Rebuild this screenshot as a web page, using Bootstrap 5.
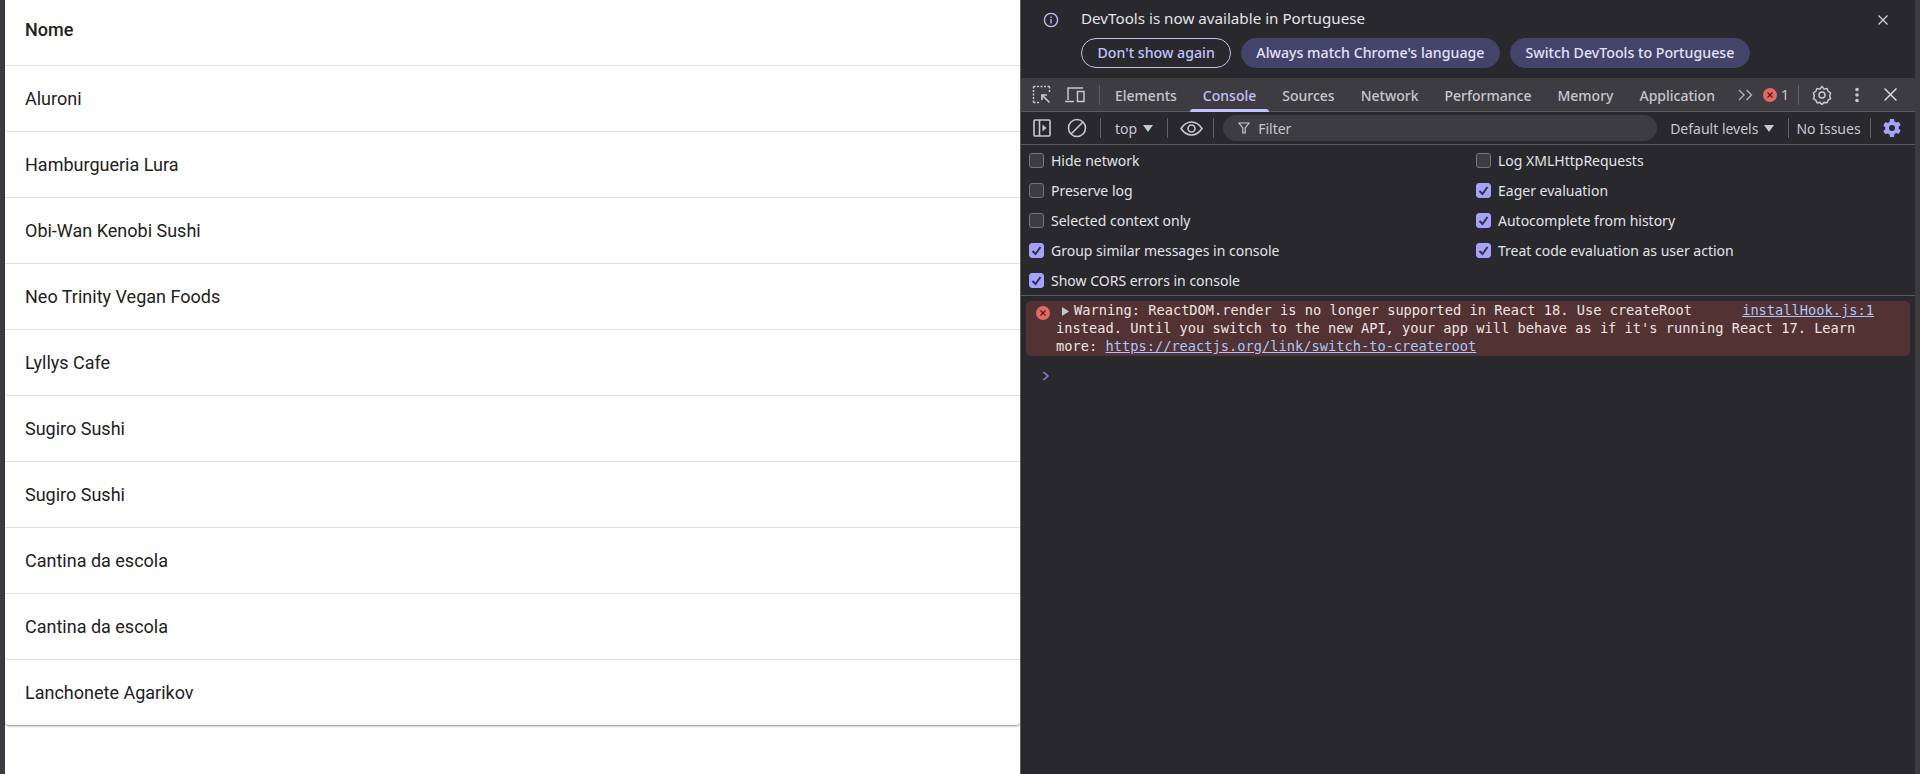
<!DOCTYPE html>
<html lang="en">
<head>
<meta charset="utf-8">
<title>Console</title>
<link href="https://cdn.jsdelivr.net/npm/bootstrap@5.3.0/dist/css/bootstrap.min.css" rel="stylesheet">
<style>
html,body{height:774px;overflow:hidden;background:#fff}
.shell{height:774px}
.edge-strip{width:5px;background:#3b3b40;flex:none}
.page-pane{width:1015px;flex:none;background:#fff}
.paper{border-radius:0 0 4px 4px;box-shadow:0 1px 2px 0 rgba(0,0,0,.38),0 1px 3px 0 rgba(0,0,0,.1);background:#fff}
.paper .table{margin:0;font-family:Roboto,sans-serif;font-size:18px;color:#212121;--bs-table-color:#212121;--bs-table-border-color:#e0e0e0;--bs-table-bg:transparent}
.paper th,.paper td{height:66px;padding:1px 20px 0;vertical-align:middle;border-bottom:1px solid #e0e0e0;line-height:24px}
.paper th{font-weight:500;height:65px;padding:0 20px 5px}
.paper tr:last-child td{border-bottom:0;height:66px;padding-bottom:0}
.dt{width:900px;flex:none;background:#28282d;border-left:1px solid #5e5e62;color:#e3e3e8;font-family:"Noto Sans",sans-serif;font-size:14px;position:relative}
.dt-inner{width:894px}
.gutter{width:5px;background:#3b3b40;position:absolute;right:0;top:78px;bottom:0}
.top-gutter{width:5px;background:#3b3b40;position:absolute;right:0;top:0;height:78px}
.infobar{height:78px;padding:6px 0 0 60px}
.infobar-msg{font-size:15.2px;line-height:24px;height:32px;color:#e3e3e8;white-space:nowrap}
.info-ico{position:absolute;left:22px;top:12px}
.info-close{position:absolute;right:27px;top:15px}
.pill{height:30px;border-radius:15px;font-size:14.2px;font-weight:500;line-height:28px;padding:0 14px;border:1px solid #c4c3e8;color:#c2c1ff;background:transparent;white-space:nowrap;font-family:"Noto Sans",sans-serif}
.pill.tonal{background:#44446a;border-color:#44446a;color:#e2e0fa}
.pill-wide{padding:0 15.5px}
.pill-mid{padding:0 15px}
.pill-row{column-gap:10px}
.tbar{height:34px;background:#3c3c41;border-bottom:1px solid #5a5a5e;width:894px}
.tbar2{height:33px;background:#28282d;border-bottom:1px solid #5a5a5e;width:894px}
.tab-item{height:33px;line-height:36px;font-size:14px;font-weight:500;color:#c7c7cc;padding:0 13px;position:relative;white-space:nowrap}
.tab-item.on{color:#c2c1ff}
.tab-item.on::after{content:"";position:absolute;left:0;right:0;bottom:-1px;height:3px;background:#c2c1ff;border-radius:3px 3px 0 0}
.vsep{width:1px;height:20px;background:#5f5f63;flex:none}
.tool{display:flex;flex:none}
.sel-txt{font-size:14px;color:#c7c7cc;white-space:nowrap}
.filter-box{width:434px;height:26px;border-radius:13px;background:#3c3c41;color:#c7c7cc;font-size:14px;padding-left:15px;flex:none}
.opts{display:grid;grid-template-columns:447px 1fr;padding:0 0 0 8px;height:151px;border-bottom:1px solid #5a5a5e;width:894px;align-content:start}
.opt{height:30px;font-size:14px;color:#e3e3e8;white-space:nowrap;margin:0}
.opt .form-check-input{width:15px;height:15px;margin:0 7px 0 0;background-color:#3c3c41;border:1px solid #75757a;border-radius:3px;flex:none}
.opt .form-check-input:checked{background-color:#a5a1ff;border-color:#a5a1ff;background-image:url("data:image/svg+xml,%3Csvg xmlns='http://www.w3.org/2000/svg' viewBox='0 0 15 15'%3E%3Cpath d='M3.5 8l3 3 5-7' fill='none' stroke='%2333333a' stroke-width='2'/%3E%3C/svg%3E");background-size:15px 15px}
.err-row{margin:5px 0 0 5px;width:884px;height:55px;background:#523232;border-radius:5px;position:relative;font-family:"DejaVu Sans Mono",monospace;font-size:13.7px;line-height:18px;color:#f0e4e2;padding:0 0 0 30px}
.err-ico{position:absolute;left:10px;top:5px}
.err-tri{position:absolute;left:36px;top:6px}
.err-src{position:absolute;right:36px;top:0;color:#a8c7fa;text-decoration:underline}
.err-line{white-space:pre;height:18px}
.err-line a{color:#a8c7fa}
.first-line{padding-left:18px}
.prompt{margin:15px 0 0 21px;line-height:0}
</style>
</head>
<body>
<div class="shell d-flex">
  <div class="edge-strip"></div>
  <div class="page-pane">
    <div class="paper">
      <table class="table mb-0">
        <thead><tr><th>Nome</th></tr></thead>
        <tbody>
          <tr><td>Aluroni</td></tr>
          <tr><td>Hamburgueria Lura</td></tr>
          <tr><td>Obi-Wan Kenobi Sushi</td></tr>
          <tr><td>Neo Trinity Vegan Foods</td></tr>
          <tr><td>Lyllys Cafe</td></tr>
          <tr><td>Sugiro Sushi</td></tr>
          <tr><td>Sugiro Sushi</td></tr>
          <tr><td>Cantina da escola</td></tr>
          <tr><td>Cantina da escola</td></tr>
          <tr><td>Lanchonete Agarikov</td></tr>
        </tbody>
      </table>
    </div>
  </div>
  <div class="dt">
    <div class="top-gutter"></div>
    <div class="gutter"></div>
    <div class="dt-inner">
      <div class="infobar position-relative">
        <svg class="info-ico" width="16" height="16" viewBox="0 0 16 16" fill="none" stroke="#c2c1ff" stroke-width="1.3"><circle cx="8" cy="8" r="6.6"/><path d="M8 7v4.5M8 4.4v1.5"/></svg>
        <svg class="info-close" width="10" height="10" viewBox="0 0 10 10" stroke="#d8d8dc" stroke-width="1.2"><path d="M.5.5l9 9M9.500.5l-9 9"/></svg>
        <div class="infobar-msg">DevTools is now available in Portuguese</div>
        <div class="d-flex pill-row">
          <button class="pill pill-wide" type="button">Don't show again</button>
          <button class="pill tonal" type="button">Always match Chrome's language</button>
          <button class="pill tonal pill-mid" type="button">Switch DevTools to Portuguese</button>
        </div>
      </div>

      <div class="tbar d-flex align-items-center">
        <svg class="tool" style="margin-left:11px" width="20" height="20" viewBox="0 0 20 20" fill="none" stroke="#c7c7cc" stroke-width="1.5"><path d="M1.500 1.500h16M1.500 1.500v16M1.500 17.500h6M17.500 1.500v6" stroke-dasharray="2 1.500"/><path d="M17.500 17.500l-7.500-7.500M10 15v-5h5" stroke-width="1.700"/></svg>
        <svg class="tool" style="margin-left:12px" width="21" height="20" viewBox="0 0 21 20" fill="none" stroke="#c7c7cc" stroke-width="1.500"><path d="M4 15V3h15M1 16.500h9"/><rect x="13.500" y="6.500" width="6.500" height="10"/></svg>
        <div class="vsep" style="margin:0 2px 0 14px"></div>
        <div class="tab-item">Elements</div>
        <div class="tab-item on">Console</div>
        <div class="tab-item">Sources</div>
        <div class="tab-item">Network</div>
        <div class="tab-item">Performance</div>
        <div class="tab-item">Memory</div>
        <div class="tab-item">Application</div>
        <svg class="tool" style="margin-left:10px" width="16" height="12" viewBox="0 0 16 12" fill="none" stroke="#b0b0b5" stroke-width="1.400"><path d="M1 1l5 5-5 5M8.500 1l5 5-5 5"/></svg>
        <svg class="tool" style="margin-left:9px" width="14" height="14" viewBox="0 0 14 14"><circle cx="7" cy="7" r="7" fill="#e46962"/><path d="M4.500 4.500l5 5M9.500 4.500l-5 5" stroke="#4a2020" stroke-width="1.300"/></svg>
        <span class="sel-txt" style="margin-left:4px">1</span>
        <div class="vsep" style="margin-left:9px"></div>
        <svg class="tool" style="margin-left:13px" width="20" height="20" viewBox="0 0 20 20" fill="none" stroke="#c7c7cc" stroke-width="1.500"><path d="M10 1.500l2 2.400 3-.4 1.200 2.800 2.400 1.700-1 3 1 2.600-2.400 1.500-1.200 2.700-3-.4-2 2.300-2-2.300-3 .4-1.200-2.700-2.400-1.500 1-2.600-1-3 2.400-1.700L5 3.500l3 .4z"/><circle cx="10" cy="10" r="3"/></svg>
        <svg class="tool" style="margin-left:22px" width="6" height="16" viewBox="0 0 6 16" fill="#c7c7cc"><circle cx="3" cy="2.500" r="1.800"/><circle cx="3" cy="8" r="1.800"/><circle cx="3" cy="13.500" r="1.800"/></svg>
        <svg class="tool" style="margin-left:24px" width="13" height="13" viewBox="0 0 13 13" stroke="#d8d8dc" stroke-width="1.500"><path d="M.5.5l12 12M12.500.5l-12 12"/></svg>
      </div>

      <div class="tbar2 d-flex align-items-center">
        <svg class="tool" style="margin-left:12px" width="18" height="18" viewBox="0 0 18 18" fill="none" stroke="#c7c7cc" stroke-width="1.600"><rect x="1" y="1" width="16" height="16" rx="1"/><path d="M6.500 1v16"/><path d="M9.500 5.500l4 3.500-4 3.500z" fill="#c7c7cc" stroke="none"/></svg>
        <svg class="tool" style="margin-left:16px" width="20" height="20" viewBox="0 0 20 20" fill="none" stroke="#c7c7cc" stroke-width="1.600"><circle cx="10" cy="10" r="8.500"/><path d="M16 4L4 16"/></svg>
        <div class="vsep" style="margin:0 14px 0 13px"></div>
        <span class="sel-txt">top</span>
        <svg class="tool" style="margin-left:6px" width="10" height="7" viewBox="0 0 10 7" fill="#c7c7cc"><path d="M0 0h10L5 7z"/></svg>
        <div class="vsep" style="margin:0 12px 0 14px"></div>
        <svg class="tool" width="23" height="15" viewBox="0 0 23 15" fill="none" stroke="#c7c7cc" stroke-width="1.600"><path d="M1 7.500C4 3 7.500 1 11.500 1S19 3 22 7.500C19 12 15.500 14 11.500 14S4 12 1 7.500z"/><circle cx="11.500" cy="7.500" r="3.500"/></svg>
        <div class="vsep" style="margin:0 9px 0 10px"></div>
        <div class="filter-box d-flex align-items-center">
          <svg class="tool me-2" width="12" height="12" viewBox="0 0 12 12" fill="none" stroke="#c7c7cc" stroke-width="1.200"><path d="M1 1h10L7.200 6v5H4.800V6z"/></svg>
          <span>Filter</span>
        </div>
        <span class="sel-txt" style="margin-left:13px">Default levels</span>
        <svg class="tool" style="margin-left:6px" width="10" height="7" viewBox="0 0 10 7" fill="#c7c7cc"><path d="M0 0h10L5 7z"/></svg>
        <div class="vsep" style="margin:0 7px 0 14px"></div>
        <span class="sel-txt">No Issues</span>
        <div class="vsep" style="margin:0 11px 0 9px"></div>
        <svg class="tool" width="20" height="20" viewBox="0 0 20 20"><path fill-rule="evenodd" fill="#a5a1ff" d="M8 1h4l.5 2.600 1.700 1 2.500-.9 2 3.400-2 1.700v2l2 1.700-2 3.400-2.500-.9-1.700 1L12 19H8l-.5-2.600-1.700-1-2.500.9-2-3.400 2-1.700v-2L1.300 7.500l2-3.400 2.500.9 1.700-1zM10 7a3 3 0 100 6 3 3 0 000-6z"/></svg>
      </div>

      <div class="opts">
        <label class="opt d-flex align-items-center"><input class="form-check-input" type="checkbox">Hide network</label>
        <label class="opt d-flex align-items-center"><input class="form-check-input" type="checkbox">Log XMLHttpRequests</label>
        <label class="opt d-flex align-items-center"><input class="form-check-input" type="checkbox">Preserve log</label>
        <label class="opt d-flex align-items-center"><input class="form-check-input" type="checkbox" checked>Eager evaluation</label>
        <label class="opt d-flex align-items-center"><input class="form-check-input" type="checkbox">Selected context only</label>
        <label class="opt d-flex align-items-center"><input class="form-check-input" type="checkbox" checked>Autocomplete from history</label>
        <label class="opt d-flex align-items-center"><input class="form-check-input" type="checkbox" checked>Group similar messages in console</label>
        <label class="opt d-flex align-items-center"><input class="form-check-input" type="checkbox" checked>Treat code evaluation as user action</label>
        <label class="opt d-flex align-items-center"><input class="form-check-input" type="checkbox" checked>Show CORS errors in console</label>
      </div>

      <div class="err-row">
        <svg class="err-ico" width="14" height="14" viewBox="0 0 14 14"><circle cx="7" cy="7" r="7" fill="#e46962"/><path d="M4.500 4.500l5 5M9.500 4.500l-5 5" stroke="#4a2020" stroke-width="1.300"/></svg>
        <svg class="err-tri" width="7" height="9" viewBox="0 0 7 9" fill="#c7c7cc"><path d="M0 0l7 4.500L0 9z"/></svg>
        <a class="err-src" href="#">installHook.js:1</a>
        <div class="err-line first-line">Warning: ReactDOM.render is no longer supported in React 18. Use createRoot</div>
        <div class="err-line">instead. Until you switch to the new API, your app will behave as if it's running React 17. Learn</div>
        <div class="err-line">more: <a href="#">https://reactjs.org/link/switch-to-createroot</a></div>
      </div>
      <div class="prompt">
        <svg width="8" height="10" viewBox="0 0 8 10" fill="none" stroke="#8a88e0" stroke-width="1.500"><path d="M1.500 1l4.500 4-4.500 4"/></svg>
      </div>
    </div>
  </div>
</div>
</body>
</html>
